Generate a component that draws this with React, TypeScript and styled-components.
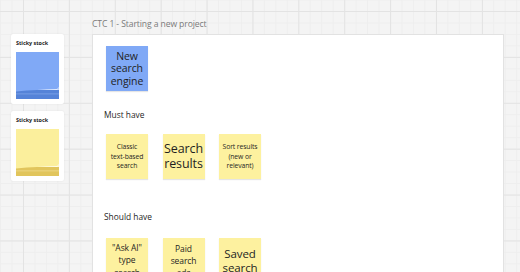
import styled, { createGlobalStyle } from "styled-components";

const GlobalStyle = createGlobalStyle`
  html, body {
    margin: 0;
    padding: 0;
    width: 520px;
    height: 272px;
    overflow: hidden;
  }
  body {
    font-family: "Open Sans", "Noto Sans", sans-serif;
    color: #1f1f1f;
  }
`;

const Board = styled.div`
  width: 520px;
  height: 272px;
  overflow: hidden;
  display: flex;
  align-items: flex-start;
  background-color: #f4f4f4;
  background-image:
    linear-gradient(to right, #e3e3e3 1px, transparent 1px),
    linear-gradient(to bottom, #e3e3e3 1px, transparent 1px),
    linear-gradient(to right, #eeeeee 1px, transparent 1px),
    linear-gradient(to bottom, #eeeeee 1px, transparent 1px);
  background-size: 45.9px 45.9px, 45.9px 45.9px, 11.475px 11.475px, 11.475px 11.475px;
  background-position: 23px 11px, 23px 11px, 23px 11px, 23px 11px;
`;

const Sidebar = styled.div`
  display: flex;
  flex-direction: column;
  gap: 7px;
  padding: 34px 0 0 11px;
`;

const StockCard = styled.div`
  width: 53px;
  height: 70px;
  box-sizing: border-box;
  background: #ffffff;
  border-radius: 2px;
  box-shadow: 0 0 2px rgba(0, 0, 0, 0.08);
  padding: 6px 5px 0 5px;
  display: flex;
  flex-direction: column;
  gap: 5px;
`;

const StockTitle = styled.div`
  font-family: "Open Sans", "Noto Sans", sans-serif;
  font-size: 5.4px;
  font-weight: 700;
  line-height: 7px;
  color: #222;
  white-space: nowrap;
`;

const FrameArea = styled.div`
  margin-left: 28px;
  margin-top: 18px;
  display: flex;
  flex-direction: column;
  gap: 4px;
`;

const FrameTitle = styled.div`
  font-family: "Open Sans", "Noto Sans", sans-serif;
  font-size: 8.6px;
  line-height: 12px;
  color: #7a7a7a;
  white-space: nowrap;
  letter-spacing: -0.1px;
`;

const Frame = styled.div`
  width: 412px;
  height: 260px;
  box-sizing: border-box;
  background: #ffffff;
  border: 1px solid #e2e2e2;
  border-bottom: none;
  padding: 11px 0 0 13px;
  display: flex;
  flex-direction: column;
`;

const Row = styled.div`
  display: flex;
  gap: 14.5px;
`;

const Sticky = styled.div<{ $color: string; $size: number; $lh: number }>`
  width: 42px;
  height: 45px;
  flex: none;
  background: ${(p) => p.$color};
  box-shadow: 0 1px 1px rgba(0, 0, 0, 0.1);
  display: flex;
  align-items: center;
  justify-content: center;
  text-align: center;
  font-family: "Open Sans", "Noto Sans", sans-serif;
  font-size: ${(p) => p.$size}px;
  line-height: ${(p) => p.$lh}px;
  color: #1f1f1f;
  letter-spacing: -0.1px;
`;

const SectionLabel = styled.div<{ $top: number; $bottom: number }>`
  font-family: "Open Sans", "Noto Sans", sans-serif;
  font-size: 8.4px;
  line-height: 12px;
  color: #1f1f1f;
  margin: ${(p) => p.$top}px 0 ${(p) => p.$bottom}px -2px;
`;

const BLUE = "#80a9f6";
const YELLOW = "#fdf19f";

function StickyStack({ top, bottom, edge }: { top: string; bottom: string; edge: string }) {
  return (
    <svg width="43" height="47" viewBox="0 0 43 47">
      <rect x="0" y="38" width="43" height="9" fill={bottom} />
      <rect x="0" y="41.5" width="43" height="0.8" fill={edge} opacity="0.5" />
      <path d="M0 0 H43 V35 Q42.5 37 40 37.3 Q22 37.6 0 39.5 Z" fill={top} />
      <path d="M40 37.3 Q42.5 37 43 35 L43.6 37.6 Q42 38 40 37.3 Z" fill={edge} />
    </svg>
  );
}

export default function App() {
  return (
    <>
      <GlobalStyle />
      <Board>
        <Sidebar>
          <StockCard>
            <StockTitle>Sticky stock</StockTitle>
            <StickyStack top={BLUE} bottom="#5583d8" edge="#a9c5fa" />
          </StockCard>
          <StockCard>
            <StockTitle>Sticky stock</StockTitle>
            <StickyStack top="#fbef9c" bottom="#e1c55c" edge="#fff6bf" />
          </StockCard>
        </Sidebar>
        <FrameArea>
          <FrameTitle>CTC 1 - Starting a new project</FrameTitle>
          <Frame>
            <Row>
              <Sticky $color={BLUE} $size={10.5} $lh={12.5}>
                New
                <br />
                search
                <br />
                engine
              </Sticky>
            </Row>
            <SectionLabel $top={18} $bottom={13}>Must have</SectionLabel>
            <Row>
              <Sticky $color={YELLOW} $size={6.8} $lh={9.5}>
                Classic
                <br />
                text-based
                <br />
                search
              </Sticky>
              <Sticky $color={YELLOW} $size={12.5} $lh={14.5}>
                Search
                <br />
                results
              </Sticky>
              <Sticky $color={YELLOW} $size={6.8} $lh={9.5}>
                Sort results
                <br />
                (new or
                <br />
                relevant)
              </Sticky>
            </Row>
            <SectionLabel $top={32} $bottom={15}>Should have</SectionLabel>
            <Row>
              <Sticky $color={YELLOW} $size={8.5} $lh={12.5}>
                "Ask AI"
                <br />
                type
                <br />
                search
              </Sticky>
              <Sticky $color={YELLOW} $size={8.5} $lh={12}>
                Paid
                <br />
                search
                <br />
                ads
              </Sticky>
              <Sticky $color={YELLOW} $size={11.5} $lh={14}>
                Saved
                <br />
                search
              </Sticky>
            </Row>
          </Frame>
        </FrameArea>
      </Board>
    </>
  );
}
